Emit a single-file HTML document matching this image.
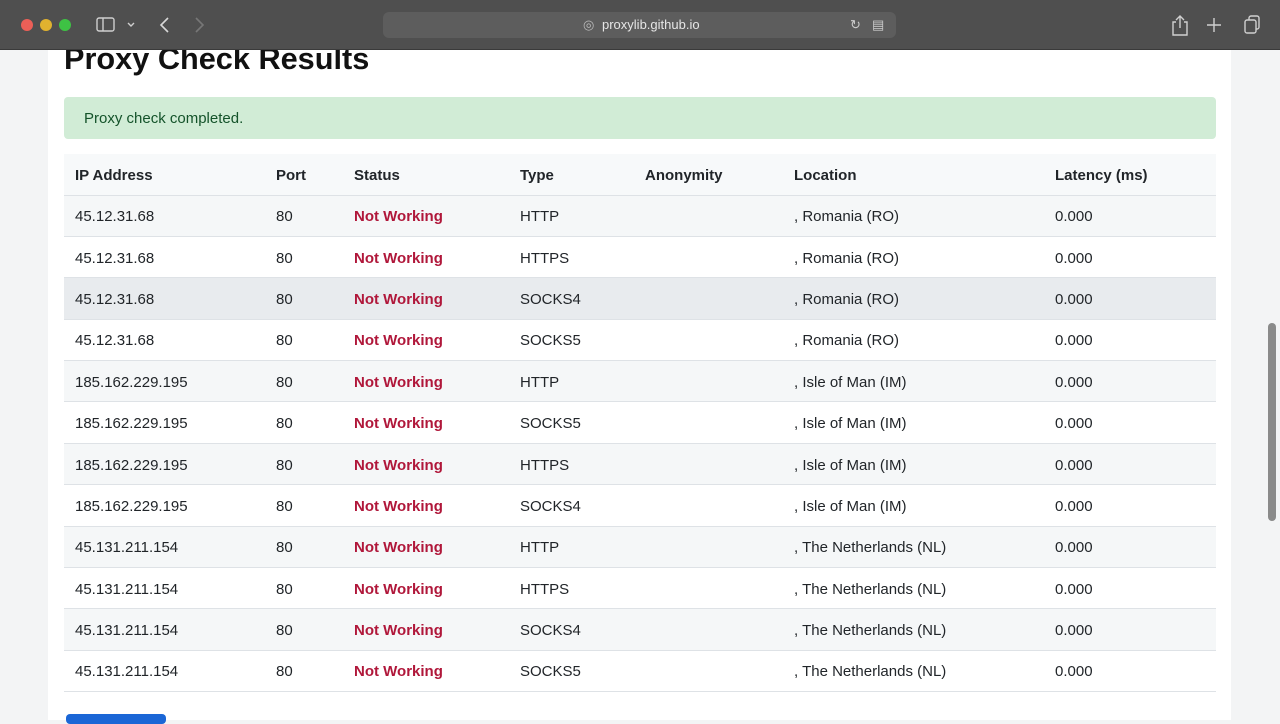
<!DOCTYPE html>
<html><head><style>
*{box-sizing:border-box;margin:0;padding:0}
body{width:1280px;height:720px;overflow:hidden;background:#f3f4f5;font-family:"Liberation Sans",Arial,sans-serif;position:relative}
.bar{position:absolute;left:0;top:0;width:1280px;height:50px;background:#4f4f4f;border-bottom:1px solid #3a3a3a}
.dot{position:absolute;top:19px;width:12px;height:12px;border-radius:50%}
.url{position:absolute;left:383px;top:12px;width:513px;height:26px;background:#5d5d5d;border-radius:6px;color:#e6e6e6;font-size:13px;line-height:26px}
.card{position:absolute;left:48px;top:50px;width:1183px;height:670px;background:#fff}
h1{position:absolute;left:64px;top:41px;font-size:30.7px;font-weight:bold;color:#111}
.alert{position:absolute;left:64px;top:97px;width:1152px;height:42px;background:#d1ecd6;border-radius:4px;color:#14532a;font-size:15px;line-height:43px;padding-left:20px}
table{position:absolute;left:64px;top:154px;width:1152px;border-collapse:collapse;font-size:15px;color:#212529}
th{text-align:left;font-weight:bold;height:41px;padding-left:11px;padding-top:2px;background:#f7f9fa;border-bottom:1px solid #dee2e6}
td{height:41.4px;padding-left:11px;padding-top:2px;border-bottom:1px solid #dee2e6}
tr:nth-child(odd) td{background:#f5f7f8}
tr.h td{background:#e8ebee}
.nw{color:#b0173a;font-weight:bold}
.sb{position:absolute;left:1268px;top:323px;width:8px;height:198px;background:#8a8a8a;border-radius:4px}
.btn{position:absolute;left:66px;top:714px;width:100px;height:10px;background:#1a66d6;border-radius:4px}
</style></head><body>
<div class="card"></div>
<h1>Proxy Check Results</h1>
<div class="alert">Proxy check completed.</div>
<table>
<thead><tr><th style="width:201px">IP Address</th><th style="width:78px">Port</th><th style="width:166px">Status</th><th style="width:125px">Type</th><th style="width:149px">Anonymity</th><th style="width:261px">Location</th><th>Latency (ms)</th></tr></thead>
<tbody>
<tr><td>45.12.31.68</td><td>80</td><td class="nw">Not Working</td><td>HTTP</td><td></td><td>, Romania (RO)</td><td>0.000</td></tr>
<tr><td>45.12.31.68</td><td>80</td><td class="nw">Not Working</td><td>HTTPS</td><td></td><td>, Romania (RO)</td><td>0.000</td></tr>
<tr class="h"><td>45.12.31.68</td><td>80</td><td class="nw">Not Working</td><td>SOCKS4</td><td></td><td>, Romania (RO)</td><td>0.000</td></tr>
<tr><td>45.12.31.68</td><td>80</td><td class="nw">Not Working</td><td>SOCKS5</td><td></td><td>, Romania (RO)</td><td>0.000</td></tr>
<tr><td>185.162.229.195</td><td>80</td><td class="nw">Not Working</td><td>HTTP</td><td></td><td>, Isle of Man (IM)</td><td>0.000</td></tr>
<tr><td>185.162.229.195</td><td>80</td><td class="nw">Not Working</td><td>SOCKS5</td><td></td><td>, Isle of Man (IM)</td><td>0.000</td></tr>
<tr><td>185.162.229.195</td><td>80</td><td class="nw">Not Working</td><td>HTTPS</td><td></td><td>, Isle of Man (IM)</td><td>0.000</td></tr>
<tr><td>185.162.229.195</td><td>80</td><td class="nw">Not Working</td><td>SOCKS4</td><td></td><td>, Isle of Man (IM)</td><td>0.000</td></tr>
<tr><td>45.131.211.154</td><td>80</td><td class="nw">Not Working</td><td>HTTP</td><td></td><td>, The Netherlands (NL)</td><td>0.000</td></tr>
<tr><td>45.131.211.154</td><td>80</td><td class="nw">Not Working</td><td>HTTPS</td><td></td><td>, The Netherlands (NL)</td><td>0.000</td></tr>
<tr><td>45.131.211.154</td><td>80</td><td class="nw">Not Working</td><td>SOCKS4</td><td></td><td>, The Netherlands (NL)</td><td>0.000</td></tr>
<tr><td>45.131.211.154</td><td>80</td><td class="nw">Not Working</td><td>SOCKS5</td><td></td><td>, The Netherlands (NL)</td><td>0.000</td></tr>
</tbody></table>
<div class="btn"></div>
<div class="sb"></div>
<div class="bar">
<div class="dot" style="left:21px;background:#ec5f57"></div>
<div class="dot" style="left:40px;background:#e0b22f"></div>
<div class="dot" style="left:59px;background:#3ec244"></div>
<svg style="position:absolute;left:96px;top:17px" width="40" height="16" fill="none" stroke="#cfcfcf" stroke-width="1.4"><rect x="1" y="1" width="17" height="13" rx="2"/><line x1="7" y1="1" x2="7" y2="14"/><path d="M32 6l3 3 3-3"/></svg>
<svg style="position:absolute;left:158px;top:16px" width="50" height="18" fill="none" stroke-width="1.6"><path d="M10 2L3 9l7 7" stroke="#d8d8d8"/><path d="M38 2l7 7-7 7" stroke="#777"/></svg>
<div class="url"><span style="position:absolute;left:200px;color:#bbb">&#9678;</span><span style="position:absolute;left:219px">proxylib.github.io</span><span style="position:absolute;left:467px;color:#ccc">&#8635;</span><span style="position:absolute;left:489px;color:#ccc">&#9636;</span></div>
<svg style="position:absolute;left:1168px;top:13px" width="100" height="24" fill="none" stroke="#d0d0d0" stroke-width="1.4"><path d="M8 9H5v13h14V9h-3M12 3v12M8 7l4-4 4 4"/><path d="M46 5v14M39 12h14"/><rect x="77" y="7" width="11" height="13" rx="2"/><path d="M81 7V5a2 2 0 012-2h6a2 2 0 012 2v9a2 2 0 01-2 2h-1"/></svg>
</div>
</body></html>
